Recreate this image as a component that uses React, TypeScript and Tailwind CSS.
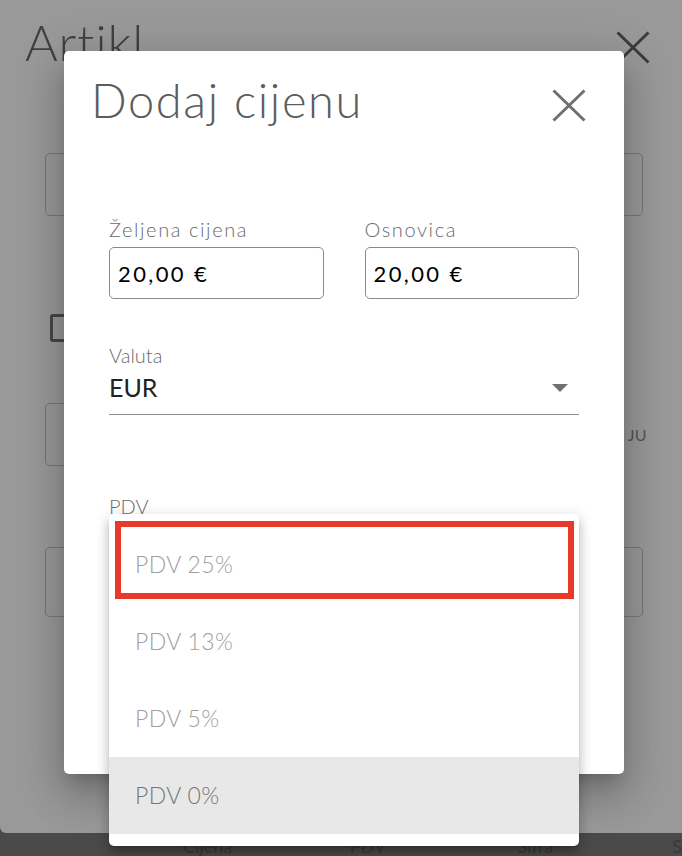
import React from 'react'

function CloseIcon({ className }: { className?: string }) {
  return (
    <svg viewBox="0 0 34 33" className={className} fill="none" stroke="currentColor" strokeWidth={3}>
      <path d="M1.5 1.5 32.5 31.5M32.5 1.5 1.5 31.5" />
    </svg>
  )
}

function PriceField({ label, value }: { label: string; value: string }) {
  return (
    <div>
      <div className="text-[20px] font-light leading-[20px] tracking-[1.6px] text-[#6b6b6b]">{label}</div>
      <div className="mt-2 flex h-[52px] items-center rounded-[5px] border border-[#8a8a8a] pl-2 text-[22px] tracking-[2.4px] text-black">
        {value}
      </div>
    </div>
  )
}

const vatOptions = ['PDV 25%', 'PDV 13%', 'PDV 5%', 'PDV 0%']

export default function App() {
  return (
    <div className="relative h-[856px] w-[682px] overflow-hidden bg-[#4a4a4a] font-['Lato',sans-serif]">
      {/* dimmed Artikl dialog underneath */}
      <div className="h-[833px] rounded-bl-[6px] bg-[#999999]">
        <div className="flex items-start justify-between pl-[25px] pr-[32px] pt-[17px]">
          <h1 className="text-[50px] font-light leading-[50px] tracking-[1px] text-[#414141]">Artikl</h1>
          <CloseIcon className="mt-[14px] h-[33px] w-[34px] text-[#3c3c3c]" />
        </div>
        <div className="pl-[45px] pr-[39px]">
          <div className="mt-[86px] h-[63px] rounded-[5px] border border-[#777777]" />
          <div className="ml-[5px] mt-[98px] h-[28px] w-[28px] rounded-[3px] border-[3px] border-[#474747]" />
          <div className="mt-[61px] flex h-[63px] items-center justify-between">
            <div className="h-[63px] w-[300px] rounded-[5px] border border-[#777777]" />
            <span className="mr-[-4px] text-[16px] tracking-wide text-[#555555]">JU</span>
          </div>
          <div className="mt-[81px] h-[70px] rounded-[5px] border border-[#777777]" />
        </div>
      </div>
      <div className="flex pl-[183px] pt-[4px] text-[18px] leading-[18px] text-[#383838]">
        <span className="w-[168px]">Cijena</span>
        <span className="w-[169px]">PDV</span>
        <span className="w-[156px]">Šifra</span>
        <span>S</span>
      </div>

      {/* Dodaj cijenu dialog */}
      <div className="absolute left-[64px] top-[51px] h-[723px] w-[560px] rounded-[5px] bg-white shadow-[0_11px_15px_-7px_rgba(0,0,0,0.2),0_24px_38px_3px_rgba(0,0,0,0.14),0_9px_46px_8px_rgba(0,0,0,0.12)]">
        <div className="flex items-start justify-between pl-[27px] pr-[38px] pt-[26px]">
          <h2 className="text-[47px] font-light leading-[47px] tracking-[1.6px] text-[#5c5c5c]">Dodaj cijenu</h2>
          <CloseIcon className="mt-[12px] h-[33px] w-[34px] text-[#707070]" />
        </div>
        <div className="px-[45px]">
          <div className="mt-[95px] grid grid-cols-2 gap-[41px]">
            <PriceField label="Željena cijena" value="20,00 €" />
            <PriceField label="Osnovica" value="20,00 €" />
          </div>
          <div className="mt-[46px]">
            <div className="text-[20px] font-light leading-[20px] text-[#6b6b6b]">Valuta</div>
            <div className="mt-[10px] flex items-center justify-between border-b border-[#8f8f8f] pb-[14px]">
              <span className="text-[25px] leading-[25px] text-[#222222]">EUR</span>
              <svg viewBox="0 0 16 8" className="mr-[11px] h-[8px] w-[16px] text-[#707070]" fill="currentColor">
                <path d="M0 0h16L8 8z" />
              </svg>
            </div>
          </div>
          <div className="mt-[81px] text-[20px] font-light leading-[20px] text-[#6b6b6b]">PDV</div>
        </div>
      </div>

      {/* PDV select menu */}
      <div className="absolute left-[109px] top-[514px] w-[470px] rounded-[5px] bg-white py-[12px] shadow-[0_5px_5px_-3px_rgba(0,0,0,0.2),0_8px_10px_1px_rgba(0,0,0,0.14),0_3px_14px_2px_rgba(0,0,0,0.12)]">
        {vatOptions.map((option, i) => (
          <div
            key={option}
            className={
              i === vatOptions.length - 1
                ? 'flex h-[77px] items-center bg-[#e8e8e8] pl-[26px] text-[23px] font-light tracking-[0.4px] text-[#777777]'
                : 'flex h-[77px] items-center pl-[26px] text-[23px] font-light tracking-[0.4px] text-[#a0a0a0]'
            }
          >
            {option}
          </div>
        ))}
        <div className="absolute left-[6px] top-[7px] h-[78px] w-[459px] border-[6px] border-[#e8392a]" />
      </div>
    </div>
  )
}
